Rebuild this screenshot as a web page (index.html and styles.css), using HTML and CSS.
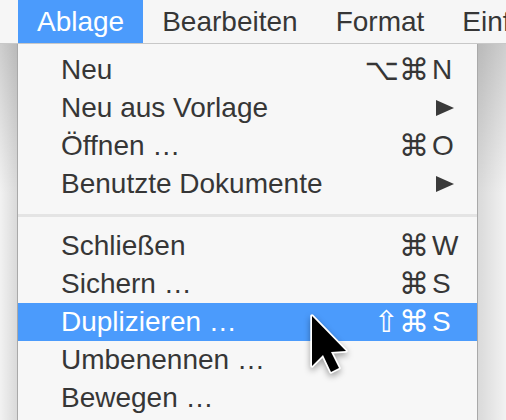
FILE: index.html
```html
<!DOCTYPE html>
<html>
  <head>
    <meta charset="UTF-8" />
    <title>Ablage</title>
    <link rel="stylesheet" href="styles.css">
  </head>
  <body>
    <div class="menubar">
      <span class="menu-title active">Ablage</span>
      <span class="menu-title">Bearbeiten</span>
      <span class="menu-title">Format</span>
      <span class="menu-title">Einfügen</span>
    </div>

    <div class="stage">
      <div class="side side-left"></div>

      <div class="menu">
        <div class="item">
          <span class="label">Neu</span>
          <span class="mods">⌥⌘</span><span class="key">N</span>
        </div>
        <div class="item">
          <span class="label">Neu aus Vorlage</span>
          <span class="key">
            <svg class="arrow" width="18" height="16" viewBox="0 0 18 16"><path d="M0 0 L18 8 L0 16 Z" fill="#3a3a3a" /></svg>
          </span>
        </div>
        <div class="item">
          <span class="label">Öffnen …</span>
          <span class="mods">⌘</span><span class="key">O</span>
        </div>
        <div class="item">
          <span class="label">Benutzte Dokumente</span>
          <span class="key">
            <svg class="arrow" width="18" height="16" viewBox="0 0 18 16"><path d="M0 0 L18 8 L0 16 Z" fill="#3a3a3a" /></svg>
          </span>
        </div>

        <div class="separator"></div>

        <div class="item">
          <span class="label">Schließen</span>
          <span class="mods">⌘</span><span class="key">W</span>
        </div>
        <div class="item">
          <span class="label">Sichern …</span>
          <span class="mods">⌘</span><span class="key">S</span>
        </div>
        <div class="item selected">
          <span class="label">Duplizieren …</span>
          <span class="mods">⇧⌘</span><span class="key">S</span>
        </div>
        <div class="item">
          <span class="label">Umbenennen …</span>
        </div>
        <div class="item">
          <span class="label">Bewegen …</span>
        </div>
      </div>

      <div class="side side-right"></div>
    </div>

    <!-- mouse pointer over the menu -->
    <svg class="cursor" width="46" height="66" viewBox="-4 -4 46 66">
      <path d="M0 0 L0 50 L11 39 L19 56 L27 52 L19 36 L34 35 Z"
            fill="#000" stroke="#fff" stroke-width="3.5" stroke-linejoin="round" paint-order="stroke" />
    </svg>
  </body>
</html>
```

FILE: styles.css
```css
html,
body {
  margin: 0;
  height: 420px;
  overflow: hidden;
}

body {
  position: relative;
  background-color: #f2f2f2;
  font-family: "Liberation Sans", "DejaVu Sans", sans-serif;
  font-size: 28px;
  color: #363636;
}

.menubar {
  display: flex;
  height: 43px;
  padding-left: 18px;
  background-color: #f6f6f6;
  border-bottom: 1px solid #c8c8c8;
  white-space: nowrap;
}

.menu-title {
  padding: 0 19px;
  line-height: 43px;
}

.menu-title.active {
  background-color: #4b9bfc;
  color: #fff;
}

.stage {
  display: flex;
  height: 376px;
}

.side {
  background-color: #f2f2f2;
}

.side-left {
  width: 17px;
  background-image:
    linear-gradient(to bottom, rgba(0, 0, 0, 0.15), rgba(0, 0, 0, 0) 150px),
    linear-gradient(to left, rgba(0, 0, 0, 0.1), rgba(0, 0, 0, 0) 17px);
}

.side-right {
  flex: 1;
  background-image:
    linear-gradient(to bottom, rgba(0, 0, 0, 0.15), rgba(0, 0, 0, 0) 150px),
    linear-gradient(to right, rgba(0, 0, 0, 0.1), rgba(0, 0, 0, 0) 28px);
}

.menu {
  width: 459px;
  padding-top: 7px;
  background-color: #f7f7f7;
  border-left: 1px solid #a9a9a9;
  border-right: 1px solid #a9a9a9;
}

.item {
  display: flex;
  align-items: center;
  height: 38px;
  padding: 0 15px 0 43px;
  line-height: 38px;
  white-space: nowrap;
}

.item.selected {
  background-color: #4b9bfc;
  color: #fff;
}

.label {
  flex: 1;
}

.mods {
  padding-right: 3px;
  font-size: 30px;
}

.key {
  display: flex;
  align-items: center;
  width: 30px;
}

.arrow {
  margin-left: 4px;
}

.separator {
  height: 3px;
  margin: 11px 0 10px;
  background-color: #e4e4e4;
}

.cursor {
  position: absolute;
  left: 308px;
  top: 312px;
  filter: drop-shadow(0 3px 3px rgba(0, 0, 0, 0.35));
}
```
